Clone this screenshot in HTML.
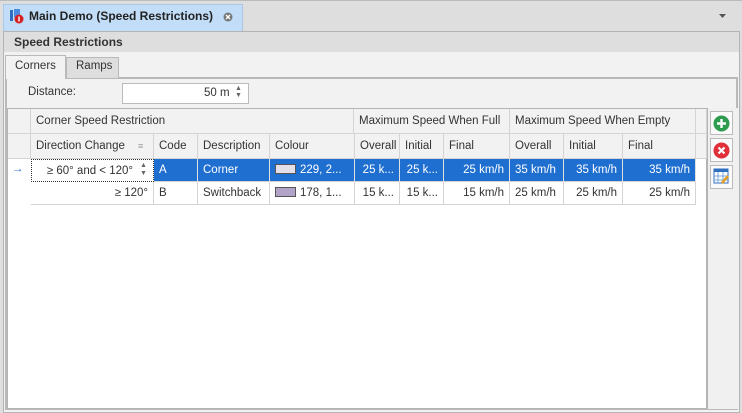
<!DOCTYPE html>
<html><head><style>
*{box-sizing:border-box;margin:0;padding:0}
body{width:742px;height:413px;background:#dedede;font-family:"Liberation Sans","DejaVu Sans",sans-serif;font-size:11.5px;color:#333;position:relative;overflow:hidden}
.a{position:absolute}
.c{position:absolute;white-space:nowrap;overflow:hidden;line-height:23px;padding:0 5px;border-right:1px solid #d4d4d4;border-bottom:1px solid #d4d4d4}
.h{background:#f2f2f2;line-height:24px}
.sel{background:#1f6fd1;color:#fff;border-right-color:#e0e0e0}
.r{text-align:right}
</style></head><body>
<div class="a" style="left:0;top:0;width:742px;height:1px;background:#bbb"></div>
<div class="a" style="left:3px;top:4px;width:240px;height:27px;background:#c2ddf7;border:1px solid #aac8e6;border-bottom:none"></div>
<svg class="a" style="left:9px;top:8px" width="16" height="16"><rect x="1" y="2" width="3" height="11" fill="#2f6fc0"/><rect x="5" y="1" width="6" height="8" fill="#4a8be0"/><circle cx="10" cy="11" r="4.5" fill="#d42020"/><rect x="9.3" y="8.5" width="1.4" height="5" fill="#fff"/></svg>
<div class="a" style="left:29px;top:9px;font-weight:bold;font-size:12px;color:#222">Main Demo (Speed Restrictions)</div>
<svg class="a" style="left:223px;top:12px" width="10" height="10"><circle cx="5" cy="5" r="4.5" fill="#777"/><path d="M3 3L7 7M7 3L3 7" stroke="#fff" stroke-width="1.4"/></svg>
<svg class="a" style="left:719px;top:14px" width="8" height="5"><path d="M0 0H7L3.5 4Z" fill="#555"/></svg>
<div class="a" style="left:3px;top:31px;width:737px;height:382px;border:1px solid #b4b4b4;background:#f2f2f2"></div>
<div class="a" style="left:4px;top:32px;width:735px;height:20px;background:#dedede"></div>
<div class="a" style="left:14px;top:35px;font-weight:bold;font-size:12px;color:#333">Speed Restrictions</div>
<div class="a" style="left:5px;top:77px;width:733px;height:333px;border:2px solid #b9b9b9;background:#f2f2f2"></div>
<div class="a" style="left:5px;top:55px;width:61px;height:24px;background:#f2f2f2;border:1px solid #b9b9b9;border-bottom:none"></div>
<div class="a" style="left:15px;top:60px">Corners</div>
<div class="a" style="left:66px;top:57px;width:53px;height:21px;background:#dedede;border:1px solid #b9b9b9;border-bottom:none"></div>
<div class="a" style="left:76px;top:60px">Ramps</div>
<div class="a" style="left:28px;top:86px">Distance:</div>
<div class="a" style="left:122px;top:83px;width:127px;height:21px;background:#fff;border:1px solid #bbb"></div>
<div class="a" style="left:204px;top:87px">50 m</div>
<div class="a" style="left:235px;top:85px;font-size:7px;line-height:7px;color:#666">▲<br>▼</div>
<div class="a" style="left:7px;top:108px;width:701px;height:301px;background:#fff;border:1px solid #b4b4b4;border-right:2px solid #b4b4b4"></div>
<div class="a" style="left:708px;top:108px;width:30px;height:301px;background:#f0f0f0"></div>
<div class="c h" style="left:8px;top:109px;width:23px;height:25px"></div>
<div class="c h" style="left:31px;top:109px;width:323px;height:25px">Corner Speed Restriction</div>
<div class="c h" style="left:354px;top:109px;width:156px;height:25px">Maximum Speed When Full</div>
<div class="c h" style="left:510px;top:109px;width:186px;height:25px">Maximum Speed When Empty</div>
<div class="c h" style="left:696px;top:109px;width:11px;height:25px"></div>
<div class="c h" style="left:8px;top:134px;width:23px;height:25px"></div>
<div class="c h" style="left:31px;top:134px;width:123px;height:25px">Direction Change<span style="position:absolute;left:107px;color:#999;font-size:9px">≡</span></div>
<div class="c h" style="left:154px;top:134px;width:44px;height:25px">Code</div>
<div class="c h" style="left:198px;top:134px;width:72px;height:25px">Description</div>
<div class="c h" style="left:270px;top:134px;width:85px;height:25px">Colour</div>
<div class="c h" style="left:355px;top:134px;width:45px;height:25px">Overall</div>
<div class="c h" style="left:400px;top:134px;width:44px;height:25px">Initial</div>
<div class="c h" style="left:444px;top:134px;width:66px;height:25px">Final</div>
<div class="c h" style="left:510px;top:134px;width:54px;height:25px">Overall</div>
<div class="c h" style="left:564px;top:134px;width:59px;height:25px">Initial</div>
<div class="c h" style="left:623px;top:134px;width:73px;height:25px">Final</div>
<div class="c h" style="left:696px;top:134px;width:11px;height:25px"></div>
<div class="a" style="left:12px;top:163px;color:#1f6fd1">→</div>
<div class="c r" style="left:31px;top:159px;width:123px;height:23px;border:1px dotted #333;padding-right:20px">≥ 60° and &lt; 120°</div>
<div class="a" style="left:140px;top:162px;font-size:7px;line-height:8px;color:#666">▲<br>▼</div>
<div class="c sel" style="left:154px;top:159px;width:44px;height:23px">A</div>
<div class="c sel" style="left:198px;top:159px;width:72px;height:23px">Corner</div>
<div class="c sel" style="left:270px;top:159px;width:85px;height:23px"><span style="display:inline-block;width:21px;height:10px;background:#e5dfe9;border:1px solid #555;vertical-align:-1px;margin-right:4px"></span>229, 2...</div>
<div class="c sel r" style="left:355px;top:159px;width:45px;height:23px">25 k...</div>
<div class="c sel r" style="left:400px;top:159px;width:44px;height:23px">25 k...</div>
<div class="c sel r" style="left:444px;top:159px;width:66px;height:23px">25 km/h</div>
<div class="c sel" style="left:510px;top:159px;width:54px;height:23px">35 km/h</div>
<div class="c sel r" style="left:564px;top:159px;width:59px;height:23px">35 km/h</div>
<div class="c sel r" style="left:623px;top:159px;width:73px;height:23px">35 km/h</div>
<div class="c r" style="left:31px;top:182px;width:123px;height:23px">≥ 120°</div>
<div class="c" style="left:154px;top:182px;width:44px;height:23px">B</div>
<div class="c" style="left:198px;top:182px;width:72px;height:23px">Switchback</div>
<div class="c" style="left:270px;top:182px;width:85px;height:23px"><span style="display:inline-block;width:21px;height:10px;background:#b2a4c8;border:1px solid #555;vertical-align:-1px;margin-right:4px"></span>178, 1...</div>
<div class="c r" style="left:355px;top:182px;width:45px;height:23px">15 k...</div>
<div class="c r" style="left:400px;top:182px;width:44px;height:23px">15 k...</div>
<div class="c r" style="left:444px;top:182px;width:66px;height:23px">15 km/h</div>
<div class="c" style="left:510px;top:182px;width:54px;height:23px">25 km/h</div>
<div class="c r" style="left:564px;top:182px;width:59px;height:23px">25 km/h</div>
<div class="c r" style="left:623px;top:182px;width:73px;height:23px">25 km/h</div>
<div class="a" style="left:710px;top:111px;width:23px;height:24px;border:1px solid #bbb;background:#fafafa"></div>
<svg class="a" style="left:713px;top:115px" width="17" height="17"><circle cx="8.5" cy="8.5" r="8" fill="#2e9c4e"/><path d="M8.5 4V13M4 8.5H13" stroke="#fff" stroke-width="2.4"/></svg>
<div class="a" style="left:710px;top:138px;width:23px;height:24px;border:1px solid #bbb;background:#fafafa"></div>
<svg class="a" style="left:713px;top:142px" width="17" height="17"><circle cx="8.5" cy="8.5" r="8" fill="#e0303a"/><path d="M5.5 5.5L11.5 11.5M11.5 5.5L5.5 11.5" stroke="#fff" stroke-width="2.2"/></svg>
<div class="a" style="left:710px;top:165px;width:23px;height:24px;border:1px solid #bbb;background:#fafafa"></div>
<svg class="a" style="left:713px;top:168px" width="17" height="17"><rect x="1" y="1" width="14" height="14" fill="#fff" stroke="#2f6fc0"/><rect x="1" y="1" width="14" height="3" fill="#2f6fc0"/><path d="M1 8H15M1 12H15M5 4V15M10 4V15" stroke="#7aa7dd"/><path d="M9 15L15 8" stroke="#e8a020" stroke-width="2.5"/></svg>
</body></html>
